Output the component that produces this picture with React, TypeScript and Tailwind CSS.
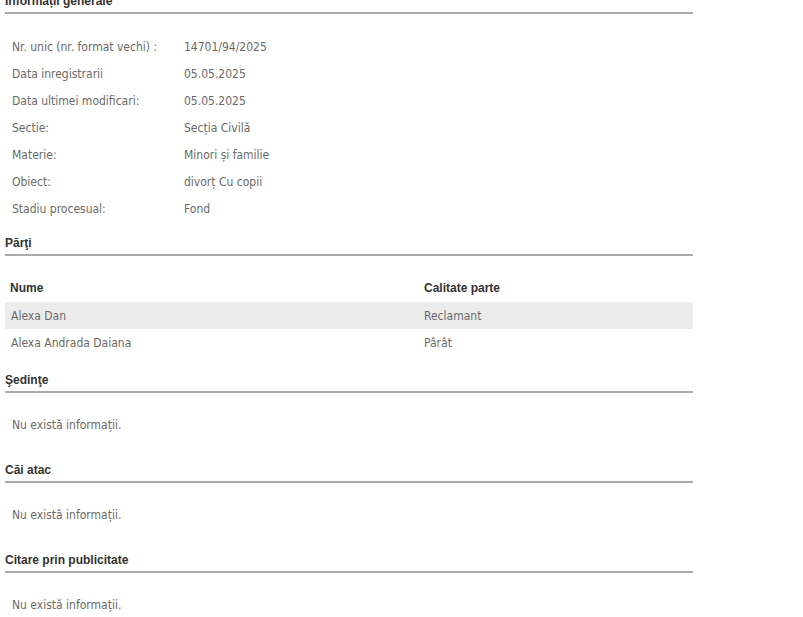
import React from 'react';

const body = "font-['DejaVu_Sans_Condensed','DejaVu_Sans',sans-serif]";

const info: [string, string][] = [
  ['Nr. unic (nr. format vechi) :', '14701/94/2025'],
  ['Data inregistrarii', '05.05.2025'],
  ['Data ultimei modificari:', '05.05.2025'],
  ['Sectie:', 'Secția Civilă'],
  ['Materie:', 'Minori și familie'],
  ['Obiect:', 'divorț Cu copii'],
  ['Stadiu procesual:', 'Fond'],
];

const parti = [
  { nume: 'Alexa Dan', calitate: 'Reclamant' },
  { nume: 'Alexa Andrada Daiana', calitate: 'Pârât' },
];

const Heading: React.FC<{ title: string }> = ({ title }) => (
  <div className="border-b-2 border-[#aaaaaa] pb-[4px]">
    <h3 className="font-['Liberation_Sans',Arial,sans-serif] font-bold text-[12px] leading-[14px] text-[#333]">
      {title}
    </h3>
  </div>
);

const Empty: React.FC = () => (
  <p className={`${body} text-[12px] leading-[14px] text-[#6a6a6a] pl-[7px] pt-[25px] pb-[31px]`}>
    Nu există informații.
  </p>
);

export default function App() {
  return (
    <div className="w-[803px] h-[617px] bg-white overflow-hidden">
      <div className="w-[688px] ml-[5px] -mt-[6px]">
        <Heading title="Informații generale" />

        {/* Informatii generale */}
        <div className={`${body} text-[12px] text-[#6a6a6a] pt-[19px] pb-[14px]`}>
          {info.map(([k, v]) => (
            <div key={k} className="flex h-[27px] items-center">
              <span className="w-[179px] pl-[7px]">{k}</span>
              <span>{v}</span>
            </div>
          ))}
        </div>

        <Heading title="Părţi" />
        <div className="pt-[17px] pb-[17px]">
          <div className="flex h-[29px] items-center font-['Liberation_Sans',Arial,sans-serif] font-bold text-[12px] text-[#333]">
            <span className="w-[419px] pl-[5px]">Nume</span>
            <span>Calitate parte</span>
          </div>
          {parti.map((p, i) => (
            <div
              key={p.nume}
              className={`${body} flex h-[27px] items-center text-[12px] text-[#6a6a6a] ${i % 2 === 0 ? 'bg-[#ececec]' : ''}`}
            >
              <span className="w-[419px] pl-[6px]">{p.nume}</span>
              <span>{p.calitate}</span>
            </div>
          ))}
        </div>

        <Heading title="Şedinţe" />
        <Empty />
        <Heading title="Căi atac" />
        <Empty />
        <Heading title="Citare prin publicitate" />
        <Empty />
      </div>
    </div>
  );
}
